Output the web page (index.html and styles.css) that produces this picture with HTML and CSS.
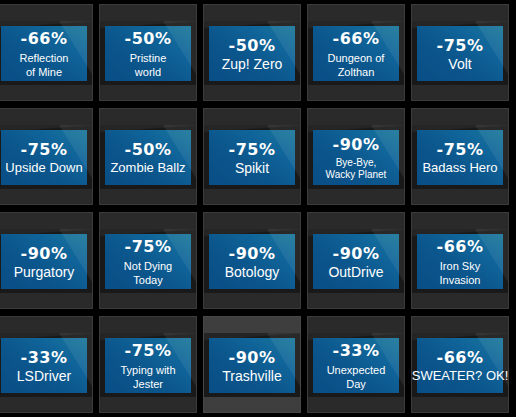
FILE: index.html
```html
<html>
<head>
    <title>Sale shelf</title>
    <link rel="stylesheet" href="styles.css">
</head>
<body>
    <div class="shelf">
        <div class="tile"><div class="band"><div class="badge"><span class="pct">-66%</span><span class="name small">Reflection<br>of Mine</span></div></div></div>
        <div class="tile"><div class="band"><div class="badge"><span class="pct">-50%</span><span class="name small">Pristine<br>world</span></div></div></div>
        <div class="tile"><div class="band"><div class="badge"><span class="pct">-50%</span><span class="name big">Zup! Zero</span></div></div></div>
        <div class="tile"><div class="band"><div class="badge"><span class="pct">-66%</span><span class="name small">Dungeon of<br>Zolthan</span></div></div></div>
        <div class="tile"><div class="band"><div class="badge"><span class="pct">-75%</span><span class="name big">Volt</span></div></div></div>

        <div class="tile"><div class="band"><div class="badge"><span class="pct">-75%</span><span class="name">Upside Down</span></div></div></div>
        <div class="tile"><div class="band"><div class="badge"><span class="pct">-50%</span><span class="name">Zombie Ballz</span></div></div></div>
        <div class="tile"><div class="band"><div class="badge"><span class="pct">-75%</span><span class="name big">Spikit</span></div></div></div>
        <div class="tile"><div class="band"><div class="badge"><span class="pct">-90%</span><span class="name tiny">Bye-Bye,<br>Wacky Planet</span></div></div></div>
        <div class="tile"><div class="band"><div class="badge"><span class="pct">-75%</span><span class="name">Badass Hero</span></div></div></div>

        <div class="tile"><div class="band"><div class="badge"><span class="pct">-90%</span><span class="name big">Purgatory</span></div></div></div>
        <div class="tile"><div class="band"><div class="badge"><span class="pct">-75%</span><span class="name small">Not Dying<br>Today</span></div></div></div>
        <div class="tile"><div class="band"><div class="badge"><span class="pct">-90%</span><span class="name big">Botology</span></div></div></div>
        <div class="tile"><div class="band"><div class="badge"><span class="pct">-90%</span><span class="name big">OutDrive</span></div></div></div>
        <div class="tile"><div class="band"><div class="badge"><span class="pct">-66%</span><span class="name small">Iron Sky<br>Invasion</span></div></div></div>

        <div class="tile"><div class="band"><div class="badge"><span class="pct">-33%</span><span class="name big">LSDriver</span></div></div></div>
        <div class="tile"><div class="band"><div class="badge"><span class="pct">-75%</span><span class="name small">Typing with<br>Jester</span></div></div></div>
        <div class="tile hover"><div class="band"><div class="badge"><span class="pct">-90%</span><span class="name big">Trashville</span></div></div></div>
        <div class="tile"><div class="band"><div class="badge"><span class="pct">-33%</span><span class="name small">Unexpected<br>Day</span></div></div></div>
        <div class="tile"><div class="band"><div class="badge"><span class="pct">-66%</span><span class="name">SWEATER? OK!</span></div></div></div>
    </div>
</body>
</html>
```

FILE: styles.css
```css
html, body {
    margin: 0;
    background: #000;
    overflow: hidden;
}

.shelf {
    display: grid;
    grid-template-columns: repeat(5, 98px);
    grid-auto-rows: 97px;
    column-gap: 6px;
    row-gap: 7px;
    margin: 4px 0 0 -5px;
}

.tile {
    box-sizing: border-box;
    border: 1px solid #3b3b3b;
    background: #2a2a2a;
    padding-top: 16px;
}

.tile.hover {
    background: #3e3e3e;
    border-color: #474747;
}

/* dark strip behind the badge, with a faint sheen on top */
.band {
    position: relative;
    height: 64px;
    box-sizing: border-box;
    padding: 5px 5px 4px;
    background: linear-gradient(176deg, #252525 0 9%, #191919 11%);
}

/* glossy corner that runs over badge and strip alike */
.band::after {
    content: "";
    position: absolute;
    left: 0; top: 0; right: 0; bottom: 0;
    background: rgba(255,255,255,0.07);
    clip-path: polygon(63px 0, 100% 0, 100% 53px);
    pointer-events: none;
}

.badge {
    height: 55px;
    display: flex;
    flex-direction: column;
    align-items: center;
    justify-content: center;
    color: #fff;
    text-align: center;
    white-space: nowrap;
    background: linear-gradient(215deg, #1a7899 0%, #10659a 28%, #0b568c 58%, #0a4e86 100%);
}

.pct {
    font: bold 16px/20px "DejaVu Sans", sans-serif;
    letter-spacing: 0.5px;
}

.name {
    font: 13px/16px "Liberation Sans", Arial, sans-serif;
}

.name.big {
    font-size: 14px;
}

.name.small {
    font-size: 11px;
    line-height: 14px;
    margin-top: 2px;
}

.name.tiny {
    font-size: 10px;
    line-height: 12px;
    margin-top: 2px;
}
```
